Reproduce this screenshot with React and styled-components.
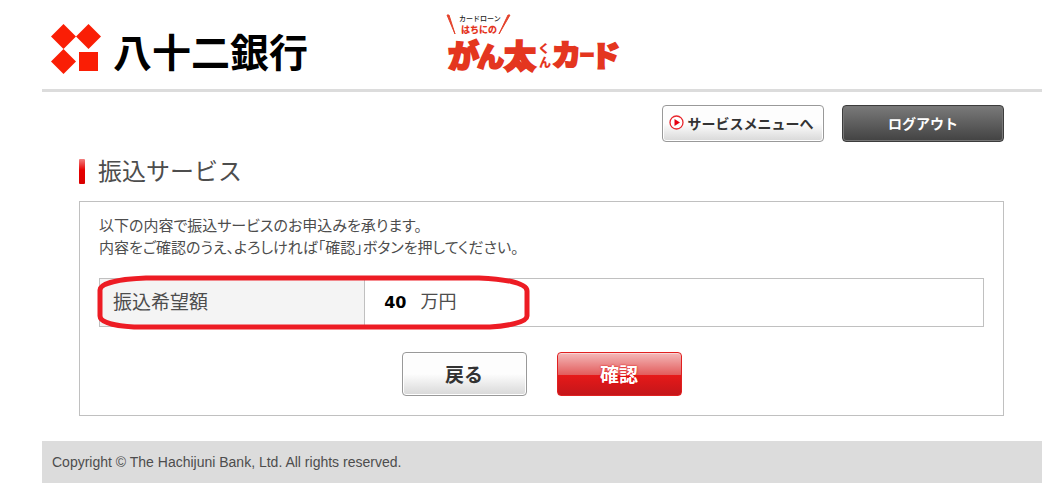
import styled, { createGlobalStyle, css } from "styled-components"

const GlobalStyle = createGlobalStyle`
    * {
        box-sizing: border-box;
    }
    body {
        margin: 0;
        background: #fff;
        color: #4d4d4d;
        font-family: 'Liberation Sans', 'Noto Sans CJK JP', sans-serif;
        font-size: 14px;
    }
`

function BankMark(){
    return (
        <svg width="50" height="52" viewBox="0 0 50 52" fill="#fa1e05" aria-hidden="true">
            <path d="M12.500 0L25 12.500L12.500 25L0 12.500Z" />
            <path d="M37.500 0L50 12.500L37.500 25L25 12.500Z" />
            <path d="M12.500 25L25 37.500L12.500 50L0 37.500Z" />
            <path d="M28 28H47V47H28Z" />
        </svg>
    )
}

function CardLogo(){
    return (
        <CardLogoSvg width="174" height="62" viewBox="0 0 174 62" role="img" aria-label="カードローン はちにの かん太くんカード">
            <path d="M0 2L2 2L8 21ZM63 2L61 2L52 21Z" fill="#e4432c" stroke="#e4432c" />
            <text x="12" y="8" fontSize="7" fontWeight="500" fill="#222">カードローン</text>
            <text x="14" y="20" fontSize="9" className="heavy">はちにの</text>
            <g className="heavy big">
                <text x="1" y="54" fontSize="31">が</text>
                <text x="30" y="54" fontSize="27">ん</text>
                <text x="57" y="55" fontSize="32">太</text>
                <text x="105" y="53" fontSize="29">カ</text>
                <text x="133" y="47" fontSize="14">ー</text>
                <text x="144" y="54" fontSize="29">ド</text>
            </g>
            <text x="91" y="40" fontSize="12" className="heavy">く</text>
            <text x="92" y="54" fontSize="12" className="heavy">ん</text>
        </CardLogoSvg>
    )
}

function PlayIcon(){
    return (
        <svg width="15" height="15" viewBox="0 0 15 15" aria-hidden="true">
            <circle cx="7.500" cy="7.500" r="6.500" fill="#fff" stroke="#e8262c" strokeWidth="1.300" />
            <path d="M5.500 4V11L11 7.500Z" fill="#e60012" />
        </svg>
    )
}

export default function App(){
    return (
        <>
            <GlobalStyle />
            <Page>
                <Header>
                    <Brand>
                        <BankMark />
                        <BankName>八十二銀行</BankName>
                    </Brand>
                    <CardLogo />
                </Header>
                <Main>
                    <TopButtons>
                        <SmallButton type="button">
                            <PlayIcon />
                            サービスメニューへ
                        </SmallButton>
                        <SmallButton type="button" $dark>ログアウト</SmallButton>
                    </TopButtons>
                    <Title>振込サービス</Title>
                    <Panel>
                        <Lead>
                            以下の内容で振込サービスのお申込みを承ります。<br />
                            内容をご確認のうえ、よろしければ「確認」ボタンを押してください。
                        </Lead>
                        <TableWrap>
                            <Table>
                                <tbody>
                                    <tr>
                                        <Th scope="row">振込希望額</Th>
                                        <Td><Amount>40</Amount>万円</Td>
                                    </tr>
                                </tbody>
                            </Table>
                            <Marker width="434" height="56" viewBox="0 0 434 56" aria-hidden="true">
                                <path d="M50 4H383C406 5 431 8 431 17V42C431 48 412 52 394 53H38C20 52 4 49 4 42V16C4 9 24 5 50 4Z" fill="none" stroke="#ed1c24" strokeWidth="5" />
                            </Marker>
                        </TableWrap>
                        <BottomButtons>
                            <BigButton type="button">戻る</BigButton>
                            <BigButton type="submit" $primary>確認</BigButton>
                        </BottomButtons>
                    </Panel>
                </Main>
                <Footer>Copyright © The Hachijuni Bank, Ltd. All rights reserved.</Footer>
            </Page>
        </>
    )
}

const Page = styled.div`
    margin: 0 15px 0 42px;
`
const Header = styled.header`
    display: flex;
    align-items: flex-start;
    gap: 139px;
    padding: 13px 9px;
    border-bottom: 3px solid #dcdcdc;
`
const Brand = styled.div`
    display: flex;
    align-items: center;
    gap: 12px;
    padding-top: 11px;
`
const BankName = styled.span`
    font-family: 'Noto Sans CJK JP', sans-serif;
    font-size: 39px;
    font-weight: 700;
    line-height: 52px;
    color: #000;
`
const CardLogoSvg = styled.svg`
    overflow: visible;
    font-family: 'Noto Sans CJK JP', sans-serif;

    .heavy {
        fill: #e4361f;
        font-weight: 900;
    }
    .big {
        stroke: #e4361f;
        stroke-width: 2px;
    }
`
const Main = styled.main`
    padding: 13px 38px 25px 37px;
`
const TopButtons = styled.div`
    display: flex;
    justify-content: flex-end;
    gap: 18px;
`
const Button = styled.button`
    display: flex;
    align-items: center;
    justify-content: center;
    padding: 0 0 2px;
    border: 1px solid #999;
    border-radius: 4px;
    color: #333;
    background: linear-gradient(#fdfdfd 50%, #d8d8d8);
    box-shadow: inset 0 0 0 1px #fff;
    font-family: 'Noto Sans CJK JP', sans-serif;
    font-weight: 700;
    cursor: pointer;
`
const SmallButton = styled(Button)`
    gap: 4px;
    width: 162px;
    height: 37px;
    padding-right: 4px;
    font-size: 14px;

    ${({ $dark }) => $dark && css`
        padding-right: 0;
        border-color: #3c3c3c;
        color: #fff;
        background: linear-gradient(#7a7a7a, #424242);
        box-shadow: inset 0 0 0 1px #777;
    `}
`
const BigButton = styled(Button)`
    width: 125px;
    height: 44px;
    font-size: 19px;

    ${({ $primary }) => $primary && css`
        border-color: #e02020;
        color: #fff;
        background: linear-gradient(#f4b9b9, #e25c5c 52%, #e61919 53%, #c4161a);
        box-shadow: inset 0 1px 0 #f9d5d5;
        text-shadow: 0 0 2px #d00;
    `}
`
const Title = styled.h1`
    display: flex;
    align-items: center;
    gap: 13px;
    margin: 17px 0;
    font-size: 24px;
    font-weight: 400;
    line-height: 25px;

    &::before {
        content: '';
        width: 6px;
        height: 25px;
        border-radius: 1px;
        background: linear-gradient(#f28080, #e60000 45%, #d90000);
    }
`
const Panel = styled.section`
    padding: 12px 19px 19px;
    border: 1px solid #c0c0c0;
`
const Lead = styled.p`
    margin: 0 0 20px;
    font-family: 'Noto Sans CJK JP', sans-serif;
    font-size: 15px;
    line-height: 22px;
    font-feature-settings: 'palt';
`
const TableWrap = styled.div`
    position: relative;
`
const Table = styled.table`
    width: 100%;
    border-collapse: collapse;
    table-layout: fixed;
`
const Th = styled.th`
    width: 30%;
    height: 48px;
    padding: 0 13px 4px;
    border: 1px solid #c0c0c0;
    background: #f4f4f4;
    font-size: 19px;
    font-weight: 400;
    text-align: left;
`
const Td = styled.td`
    padding: 0 19px 6px;
    border: 1px solid #c0c0c0;
    font-size: 18px;
`
const Amount = styled.strong`
    margin-right: 14px;
    font-family: 'DejaVu Sans', sans-serif;
    font-size: 16px;
    color: #000;
`
// hand-drawn ring round the amount
const Marker = styled.svg`
    position: absolute;
    top: -4px;
    left: -3px;
    pointer-events: none;
`
const BottomButtons = styled.div`
    display: flex;
    justify-content: center;
    gap: 30px;
    margin-top: 25px;
`
const Footer = styled.footer`
    padding: 0 10px;
    background: #dcdcdc;
    font-size: 14px;
    line-height: 42px;
`
